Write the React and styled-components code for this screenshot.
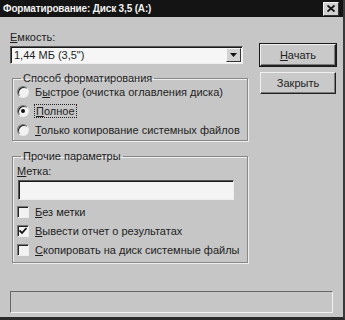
import React from 'react'
import styled, { createGlobalStyle } from 'styled-components'

const Global = createGlobalStyle`
  html, body {
    margin: 0;
    padding: 0;
    background: #c4c4c4;
  }
  body {
    font-family: "Liberation Sans", Arial, sans-serif;
    font-size: 11px;
    color: #1e1e1e;
  }
`;

const Window = styled.div`
  width: 345px;
  height: 320px;
  box-sizing: border-box;
  background: #c6c6c6;
  border-bottom: 3px solid #2a2a2a;
  border-right: 2px solid #3a3a3a;
  display: flex;
  flex-direction: column;
  overflow: hidden;
`;

const TitleBar = styled.div`
  height: 17px;
  background: #141414;
  display: flex;
  align-items: center;
  justify-content: space-between;
  padding: 0 3px 0 3px;
`;

const Title = styled.span`
  color: #f2f2f2;
  font-weight: bold;
  font-size: 10px;
  letter-spacing: -0.15px;
`;

const CloseBox = styled.div`
  width: 16px;
  height: 14px;
  background: #d0d0d0;
  border-top: 1px solid #f4f4f4;
  border-left: 1px solid #f4f4f4;
  border-right: 1px solid #333;
  border-bottom: 1px solid #333;
  box-sizing: border-box;
  display: flex;
  align-items: center;
  justify-content: center;
  margin-right: 1px;
`;

const Body = styled.div`
  flex: 1;
  display: flex;
  flex-direction: column;
  padding: 14px 10px 0 10px;
`;

const Top = styled.div`
  display: flex;
  gap: 12px;
`;

const LeftCol = styled.div`
  width: 238px;
  display: flex;
  flex-direction: column;
`;

const RightCol = styled.div`
  display: flex;
  flex-direction: column;
  gap: 6px;
  padding-top: 13px;
`;

const Label = styled.div`
  line-height: 13px;
  margin-bottom: 2px;
  white-space: nowrap;
`;

const U = styled.span`
  text-decoration: underline;
`;

const Combo = styled.div`
  width: 233px;
  height: 18px;
  box-sizing: border-box;
  background: #f6f6f6;
  border-top: 1px solid #555;
  border-left: 1px solid #555;
  border-right: 1px solid #eee;
  border-bottom: 1px solid #eee;
  box-shadow: inset 1px 1px 0 #1a1a1a;
  display: flex;
  align-items: center;
  padding-left: 3px;
`;

const ComboText = styled.span`
  flex: 1;
`;

const ArrowBtn = styled.div`
  width: 15px;
  height: 14px;
  margin-right: 1px;
  box-sizing: border-box;
  background: #d2d2d2;
  border-top: 1px solid #f4f4f4;
  border-left: 1px solid #f4f4f4;
  border-right: 1px solid #333;
  border-bottom: 1px solid #333;
  display: flex;
  align-items: center;
  justify-content: center;
`;

const Button = styled.div`
  width: 76px;
  height: 22px;
  box-sizing: border-box;
  background: #c9c9c9;
  border-top: 1px solid #f0f0f0;
  border-left: 1px solid #f0f0f0;
  border-right: 1px solid #222;
  border-bottom: 1px solid #222;
  box-shadow: inset -1px -1px 0 #7a7a7a;
  outline: ${p => (p.$default ? '1px solid #1a1a1a' : 'none')};
  display: flex;
  align-items: center;
  justify-content: center;
`;

const Group = styled.fieldset`
  margin: ${p => p.$top}px 0 0 2px;
  padding: ${p => p.$padTop}px 6px ${p => p.$padBottom}px 4px;
  border: 1px solid #888;
  box-shadow: 1px 1px 0 #eee, inset 1px 1px 0 #eee;
  min-width: 0;
  width: 236px;
  box-sizing: border-box;
  display: flex;
  flex-direction: column;
`;

const Legend = styled.legend`
  padding: 0 2px;
  margin-left: 4px;
  line-height: 13px;
  white-space: nowrap;
`;

const RadioList = styled.div`
  display: flex;
  flex-direction: column;
  margin-top: -3px;
`;

const OptRow = styled.div`
  display: flex;
  align-items: center;
  gap: 6px;
  height: 19px;
  white-space: nowrap;
`;

const Radio = styled.span`
  flex: none;
  width: 12px;
  height: 12px;
  box-sizing: border-box;
  border-radius: 50%;
  background: #f2f2f2;
  border: 1px solid #777;
  border-right-color: #eee;
  border-bottom-color: #eee;
  box-shadow: inset 1px 1px 0 #222;
  display: flex;
  align-items: center;
  justify-content: center;
  &::after {
    content: '';
    width: 4px;
    height: 4px;
    border-radius: 50%;
    background: ${p => (p.$on ? '#111' : 'transparent')};
  }
`;

const Check = styled.span`
  flex: none;
  width: 12px;
  height: 12px;
  box-sizing: border-box;
  background: #f2f2f2;
  border: 1px solid #777;
  border-right-color: #eee;
  border-bottom-color: #eee;
  box-shadow: inset 1px 1px 0 #222;
  display: flex;
  align-items: center;
  justify-content: center;
`;

const Focus = styled.span`
  outline: 1px dotted #222;
  padding: 0 1px;
`;

const TextBox = styled.div`
  height: 20px;
  width: 216px;
  margin-left: 1px;
  margin-bottom: 2px;
  box-sizing: border-box;
  background: #f4f4f4;
  border-top: 1px solid #555;
  border-left: 1px solid #555;
  border-right: 1px solid #eee;
  border-bottom: 1px solid #eee;
  box-shadow: inset 1px 1px 0 #1a1a1a;
`;

const Status = styled.div`
  margin: 28px 0 0 0;
  height: 22px;
  box-sizing: border-box;
  border-top: 1px solid #666;
  border-left: 1px solid #666;
  border-right: 1px solid #f2f2f2;
  border-bottom: 1px solid #f2f2f2;
`;

export default function App() {
  return (
    <>
      <Global />
      <Window>
        <TitleBar>
          <Title>Форматирование: Диск 3,5 (A:)</Title>
          <CloseBox>
            <svg width="8" height="7" viewBox="0 0 8 7">
              <path d="M0.5 0.5 L7.5 6.5 M7.5 0.5 L0.5 6.5" stroke="#111" strokeWidth="1.8" />
            </svg>
          </CloseBox>
        </TitleBar>
        <Body>
          <Top>
            <LeftCol>
              <Label><U>Е</U>мкость:</Label>
              <Combo>
                <ComboText>1,44 МБ (3,5")</ComboText>
                <ArrowBtn>
                  <svg width="7" height="4" viewBox="0 0 7 4">
                    <path d="M0 0 H7 L3.5 4 Z" fill="#111" />
                  </svg>
                </ArrowBtn>
              </Combo>
              <Group $top={8} $padTop={0} $padBottom={1}>
                <Legend>Способ форматирования</Legend>
                <RadioList>
                  <OptRow>
                    <Radio />
                    <span>Б<U>ы</U>строе (очистка оглавления диска)</span>
                  </OptRow>
                  <OptRow>
                    <Radio $on />
                    <Focus><U>П</U>олное</Focus>
                  </OptRow>
                  <OptRow>
                    <Radio />
                    <span><U>Т</U>олько копирование системных файлов</span>
                  </OptRow>
                </RadioList>
              </Group>
              <Group $top={9} $padTop={2} $padBottom={3}>
                <Legend>Прочие параметры</Legend>
                <Label><U>М</U>етка:</Label>
                <TextBox />
                <OptRow>
                  <Check />
                  <span><U>Б</U>ез метки</span>
                </OptRow>
                <OptRow>
                  <Check>
                    <svg width="8" height="8" viewBox="0 0 8 8">
                      <path d="M0.5 3.5 L3 6 L7.5 1" stroke="#111" strokeWidth="1.8" fill="none" />
                    </svg>
                  </Check>
                  <span><U>В</U>ывести отчет о результатах</span>
                </OptRow>
                <OptRow>
                  <Check />
                  <span><U>С</U>копировать на диск системные файлы</span>
                </OptRow>
              </Group>
            </LeftCol>
            <RightCol>
              <Button $default><span><U>Н</U>ачать</span></Button>
              <Button><span>Закрыть</span></Button>
            </RightCol>
          </Top>
          <Status />
        </Body>
      </Window>
    </>
  )
}
